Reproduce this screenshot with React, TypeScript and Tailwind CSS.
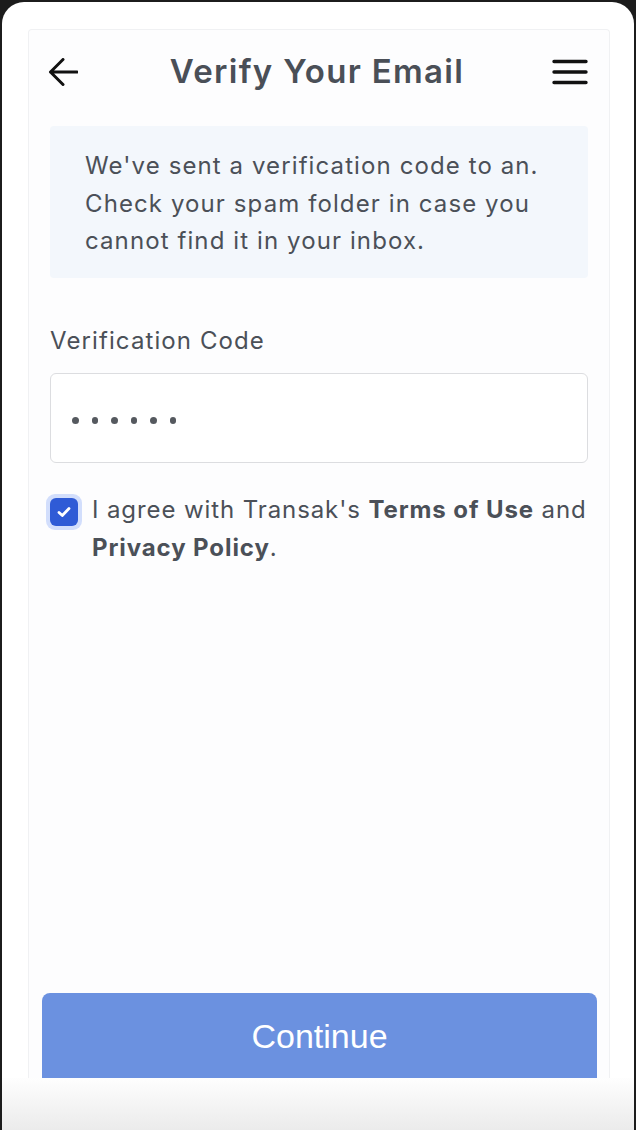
import React, { useState } from 'react';

const font = { fontFamily: 'Inter, "Noto Sans", sans-serif' };

export default function App() {
  const [agreed, setAgreed] = useState(true);
  const code = '123456';

  return (
    <div className="h-[1130px] overflow-hidden bg-[#1c1c1c] px-[2px] pt-[2px]" style={font}>
      <div className="relative flex h-full flex-col rounded-t-[22px] bg-white">
        <div className="ml-[26px] mr-[24px] mt-[27px] flex flex-1 flex-col rounded-t-[4px] border border-b-0 border-[#f0f1f3] bg-[#fdfdfe]">
          {/* header */}
          <div className="flex h-[84px] items-center justify-between pl-[19px] pr-[21px]">
            <button className="flex h-[30px] w-[30px] items-center justify-center">
              <svg width="30" height="28" viewBox="0 0 30 28" fill="none" stroke="#111" strokeWidth="3" strokeLinecap="round" strokeLinejoin="round">
                <path d="M29 14H2.5M15 1.5L2.5 14L15 26.5" />
              </svg>
            </button>
            <h1 className="pl-[4px] text-[33px] font-semibold tracking-[1.3px] text-[#4a4f57]">Verify Your Email</h1>
            <button className="flex h-[30px] w-[36px] items-center justify-center">
              <svg width="36" height="26" viewBox="0 0 36 26" fill="none" stroke="#111" strokeWidth="3.4" strokeLinecap="round">
                <path d="M2 2.5H34M2 13H34M2 23.5H34" />
              </svg>
            </button>
          </div>

          <div className="flex flex-1 flex-col px-[21px] pt-[12px]">
            <div className="rounded-[4px] bg-[#f3f7fc] pl-[35px] pr-[20px] pb-[18px] pt-[21px] text-[24px] leading-[37.5px] tracking-[1.1px] text-[#4b5058]">
              <p>
                We've sent a verification code to an.
                <br />
                Check your spam folder in case you
                <br />
                cannot find it in your inbox.
              </p>
            </div>

            <label className="mt-[44px] block text-[24px] leading-[38px] tracking-[1.1px] text-[#4b5058]">
              Verification Code
            </label>
            <div className="mt-[13px] flex h-[90px] items-center gap-[13px] rounded-[6px] border-[1.5px] border-[#dcdde0] bg-white pl-[21px] pt-[6px]">
              {code.split('').map((_, i) => (
                <span key={i} className="h-[6.5px] w-[6.5px] rounded-full bg-[#55595f]" />
              ))}
            </div>

            <div className="mt-[28px] flex items-start gap-[10px]">
              <button
                onClick={() => setAgreed(!agreed)}
                className="-ml-[4px] mt-[3px] flex h-[36px] w-[36px] shrink-0 items-center justify-center rounded-[9px] bg-[#d2defc]"
              >
                <span className="flex h-[28px] w-[28px] items-center justify-center rounded-[6px] bg-[#2f5bd6]">
                  {agreed && (
                    <svg width="14" height="12" viewBox="0 0 14 12" fill="none" stroke="#fff" strokeWidth="2.8" strokeLinecap="round" strokeLinejoin="round">
                      <path d="M2 6.5L5.3 9.5L12 2.5" />
                    </svg>
                  )}
                </span>
              </button>
              <p className="text-[24px] leading-[38px] tracking-[0.9px] text-[#4b5058]">
                I agree with Transak's <span className="font-bold">Terms of Use</span> and{' '}
                <span className="font-bold">Privacy Policy</span>.
              </p>
            </div>
          </div>

          <div className="pl-[13px] pr-[12px]">
            <button
              className="flex h-[85px] w-full items-center justify-center rounded-t-[8px] bg-[#6b91e0] pt-[2px] text-[34px] text-white"
              style={{ fontFamily: '"Liberation Sans", Arial, sans-serif' }}
            >
              Continue
            </button>
          </div>
        </div>
        <div className="h-[52px] bg-gradient-to-b from-[#fefefe] to-[#ebebeb]" />
      </div>
    </div>
  );
}
